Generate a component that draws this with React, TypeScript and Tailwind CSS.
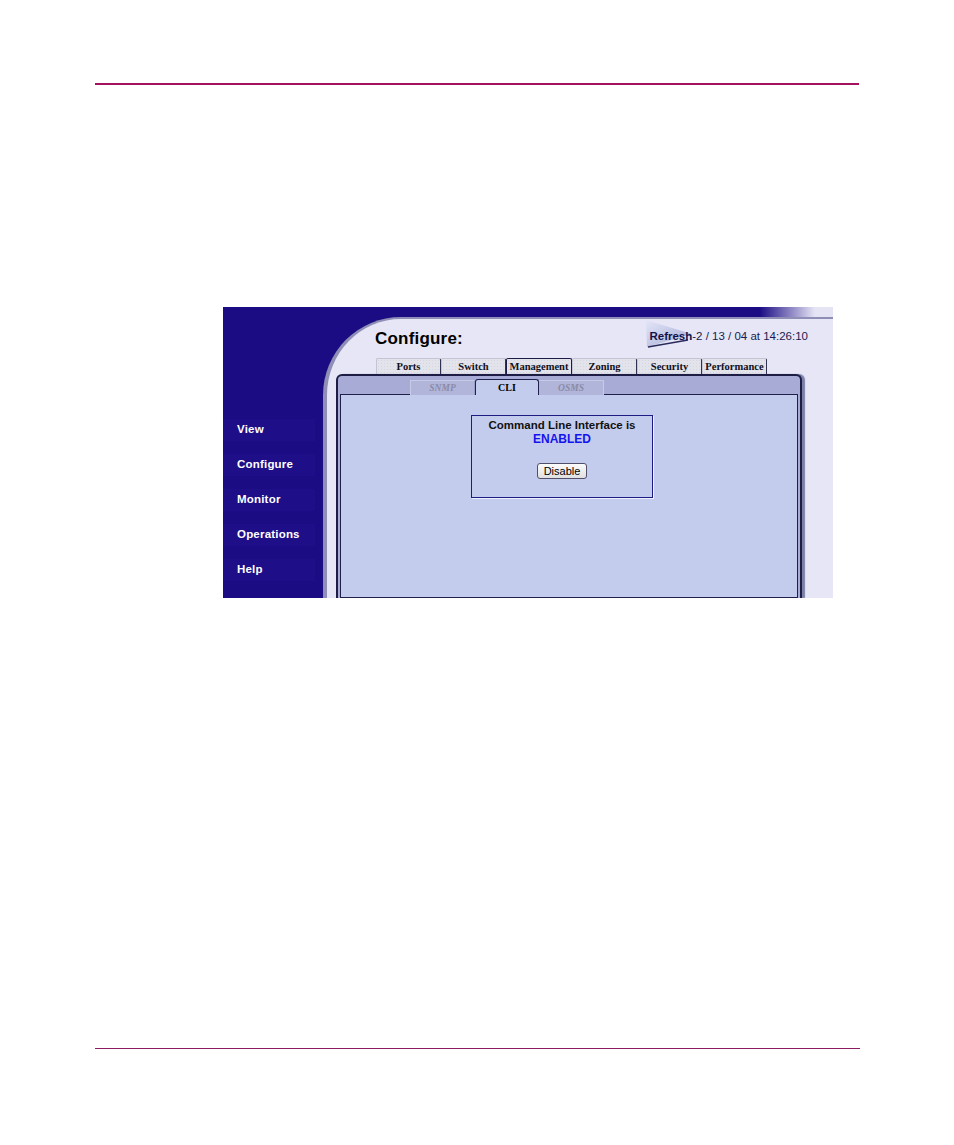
import React from 'react';

const topTabs = [
  { label: 'Ports', w: 'w-[65px]' },
  { label: 'Switch', w: 'w-[65px]' },
  { label: 'Management', w: 'w-[66px]', active: true },
  { label: 'Zoning', w: 'w-[65px]' },
  { label: 'Security', w: 'w-[65px]' },
  { label: 'Performance', w: 'w-[65px]' },
];

const menu = ['View', 'Configure', 'Monitor', 'Operations', 'Help'];

function RefreshMark() {
  return (
    <svg
      className="absolute -left-[3px] -top-[9px]"
      width="50"
      height="32"
      viewBox="0 0 50 32"
    >
      <defs>
        <linearGradient id="rf" x1="0" y1="0" x2="1" y2="1">
          <stop offset="0" stopColor="#e4e6f8" />
          <stop offset="1" stopColor="#a2aad4" />
        </linearGradient>
      </defs>
      <polygon points="0,1 46,15 1,28" fill="url(#rf)" />
      <line x1="2" y1="28" x2="42" y2="21" stroke="#2a2a5c" strokeWidth="1.4" />
    </svg>
  );
}

export default function App() {
  return (
    <div className="w-[954px] h-[1145px] bg-white flex flex-col font-['Liberation_Sans',Arial,sans-serif]">
      {/* page header rule */}
      <div className="ml-[95px] mt-[83px] w-[764px] h-[2px] bg-[#a3115f]" />

      {/* screenshot */}
      <div className="ml-[223px] mt-[222px] w-[610px] h-[291px] shrink-0 overflow-hidden flex bg-[linear-gradient(to_right,#1c0c84_0%,#1c0c84_88%,#e4e4f4_97%)]">
        {/* left nav */}
        <div className="w-[100px] shrink-0 flex flex-col pt-[105px] bg-[#1c0c84]">
          {menu.map((m) => (
            <div key={m} className="h-[35px] flex items-center">
              <div className="w-[92px] h-[22px] flex items-center pl-[14px] bg-[#1e0e87] text-white font-bold text-[11.5px] tracking-[0.2px]">
                {m}
              </div>
            </div>
          ))}
        </div>

        {/* main area */}
        <div className="flex-1 flex flex-col pt-[10px]">
          <div className="flex-1 flex flex-col bg-[#e6e6f6] border-l-4 border-t-2 border-[#8e8eb6] rounded-tl-[78px]">
            {/* header */}
            <div className="h-[39px] shrink-0 flex items-center justify-between pl-[48px] pr-[25px]">
              <span className="text-[17px] font-bold text-black tracking-[0.2px]">Configure:</span>
              <div className="flex items-center mt-[-3px] text-[11.5px]">
                <span className="relative font-bold text-[#12124a]">
                  <RefreshMark />
                  <span className="relative">Refresh</span>
                </span>
                <span className="text-[#1a1a50]">-2 / 13 / 04 at 14:26:10</span>
              </div>
            </div>

            {/* top tabs */}
            <div className="h-[16px] shrink-0 flex pl-[49px]">
              {topTabs.map((t) => (
                <div
                  key={t.label}
                  className={`${t.w} h-[16px] flex items-center justify-center rounded-t-[2px] bg-[#e3e3ec] bg-[radial-gradient(#d6d6e2_0.5px,transparent_0.6px)] bg-[length:3px_3px] font-['Liberation_Serif',serif] font-bold text-[10.5px] text-[#101020] ${
                    t.active
                      ? 'border border-b-0 border-[#1c1c44]'
                      : 'border-t border-l border-[#c4c4d4] border-r border-r-[#303050]'
                  }`}
                >
                  {t.label}
                </div>
              ))}
            </div>

            {/* panel */}
            <div className="ml-[9px] w-[466px] flex-1 flex flex-col border-2 border-b-0 border-[#1c1c44] rounded-t-[6px] bg-[#a7abd6] shadow-[3px_0_1px_#7a80a8] px-[2px] pt-[4px]">
              {/* sub tabs */}
              <div className="h-[15px] shrink-0 flex items-end pl-[70px] relative z-10 -mb-px">
                <div className="w-[65px] h-[15px] flex items-center justify-center bg-[#b1b5da] border-l border-t border-[#c8cbe6] border-r border-r-[#9a9ecb] font-['Liberation_Serif',serif] font-bold italic text-[9.5px] text-[#8a8aa8]">
                  SNMP
                </div>
                <div className="w-[64px] h-[16px] flex items-center justify-center bg-[#c4ccee] border border-b-0 border-[#20204c] rounded-t-[3px] font-['Liberation_Serif',serif] font-bold text-[10px] text-black">
                  CLI
                </div>
                <div className="w-[65px] h-[15px] flex items-center justify-center bg-[#b1b5da] border-t border-[#c8cbe6] border-r border-r-[#c8cbe6] font-['Liberation_Serif',serif] font-bold italic text-[9.5px] text-[#8a8aa8]">
                  OSMS
                </div>
              </div>

              {/* content */}
              <div className="flex-1 border border-[#20204c] bg-[#c4ccee]">
                <div className="ml-[130px] mt-[20px] w-[182px] h-[83px] border border-[#1c1c82] shadow-[1px_1px_0_#eef0ff] flex flex-col items-center pt-[2px]">
                  <div className="text-[11.5px] leading-[14px] font-bold text-[#111]">
                    Command Line Interface is
                  </div>
                  <div className="text-[12px] leading-[14px] font-bold text-[#1414ee]">ENABLED</div>
                  <button className="mt-[17px] w-[50px] h-[16px] flex items-center justify-center border border-[#50506a] rounded-[3px] bg-[linear-gradient(#fbfbfb,#e0e0e0)] text-[11px] leading-none text-black">
                    Disable
                  </button>
                </div>
              </div>
            </div>
          </div>
        </div>
      </div>

      {/* page footer rule */}
      <div className="ml-[95px] mt-[450px] w-[765px] h-px bg-[#8c1c62]" />
    </div>
  );
}
